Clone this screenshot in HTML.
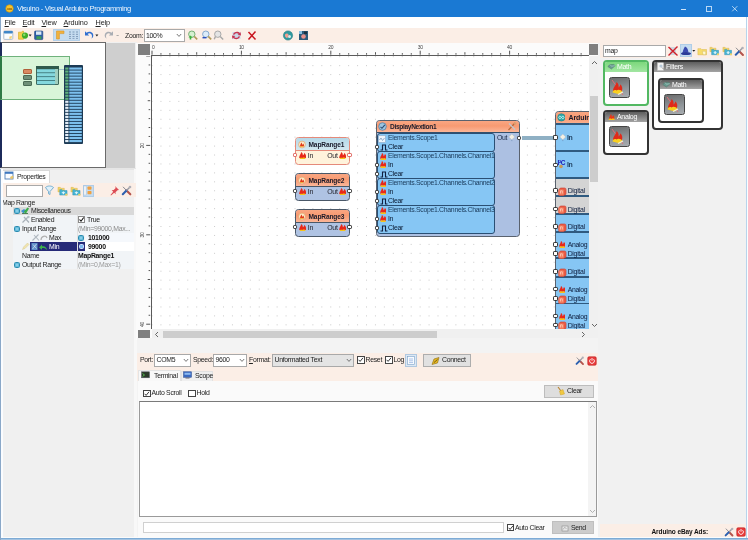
<!DOCTYPE html>
<html><head><meta charset="utf-8"><title>Visuino - Visual Arduino Programming</title>
<style>
*{box-sizing:border-box;margin:0;padding:0}
html,body{width:748px;height:540px;overflow:hidden;background:#f0f0f0;font-family:"Liberation Sans",sans-serif;font-size:6.9px;letter-spacing:-.3px;color:#222}
.a{position:absolute}
.t{position:absolute;white-space:nowrap;line-height:1}
#w{position:absolute;left:0;top:0;width:748px;height:540px;will-change:transform}
#title{left:0;top:0;width:748px;height:17px;background:#1a79d3}
#menu{left:0;top:17px;width:748px;height:11px;background:#fff;font-size:7.3px;letter-spacing:-.15px}
#tool{left:0;top:28px;width:748px;height:15px;background:#fbeee6}
.peach{background:#fbeee6}
u{text-decoration:underline}
.b{font-weight:bold;color:#111}
</style></head><body><div id="w">
<!-- TITLE -->
<div id="title" class="a">
 <svg class="a" style="left:4.800px;top:3.600px" width="9" height="9" viewBox="0 0 11 11"><circle cx="5.5" cy="5.5" r="4.6" fill="#f4c430" stroke="#c98f10" stroke-width=".8"/><text x="5.5" y="7.4" font-size="5" font-weight="bold" text-anchor="middle" fill="#7a4a00" font-family="Liberation Sans,sans-serif">oo</text></svg>
 <div class="t" style="left:17px;top:5px;font-size:7.6px;letter-spacing:-.38px;color:#eef5fd">Visuino - Visual Arduino Programming</div>
 <div class="a" style="left:681px;top:8.500px;width:5px;height:1px;background:#cfe4f8"></div>
 <div class="a" style="left:706px;top:6px;width:6px;height:5.500px;border:1px solid #b8d8f6"></div>
 <svg class="a" style="left:731px;top:5px" width="8" height="8" viewBox="0 0 8 8"><path d="M1.200 1.200L6.300 6.300M6.300 1.200L1.200 6.300" stroke="#d4e8fa" stroke-width=".8"/></svg>
</div>
<!-- MENU -->
<div id="menu" class="a">
 <div class="t" style="left:4.500px;top:2.300px"><u>F</u>ile</div>
 <div class="t" style="left:22.500px;top:2.300px"><u>E</u>dit</div>
 <div class="t" style="left:41.500px;top:2.300px"><u>V</u>iew</div>
 <div class="t" style="left:63.500px;top:2.300px"><u>A</u>rduino</div>
 <div class="t" style="left:95.500px;top:2.300px"><u>H</u>elp</div>
</div>
<!-- TOOLBAR -->
<div id="tool" class="a"></div>
<!-- toolbar items -->
<svg class="a" style="left:3px;top:30px" width="11" height="11" viewBox="0 0 11 11"><rect x=".8" y="1" width="9" height="8.4" rx="1" fill="#fdfdfd" stroke="#9db4cc" stroke-width=".8"/><rect x=".8" y="1" width="9" height="2.4" rx=".8" fill="#3f86c8"/><path d="M6.5 6.5l2.5-.5-.5 2.8-2.3 0z" fill="#f1d37a"/></svg>
<svg class="a" style="left:17px;top:30px" width="16" height="11" viewBox="0 0 16 11"><path d="M1.5 2.2h3l.8-1h1.2v8h-5z" fill="#f3d04a" stroke="#d3a91e" stroke-width=".6"/><circle cx="8" cy="5.6" r="3.1" fill="#3fae2a"/><circle cx="7.2" cy="4.8" r="1.2" fill="#8fdc6a"/><path d="M11.6 4.6h3l-1.5 1.8z" fill="#222"/></svg>
<svg class="a" style="left:34px;top:30px" width="10" height="11" viewBox="0 0 10 11"><rect x=".6" y="1" width="8.2" height="8.6" rx=".8" fill="#2c5da8" stroke="#1d3f7a" stroke-width=".6"/><rect x="2" y="1.4" width="5.4" height="3.4" fill="#d9e8f5"/><rect x="2.4" y="6.2" width="5" height="3" fill="#3d9c56"/></svg>
<div class="a" style="left:53px;top:29px;width:27px;height:12px;background:#c5dcf0;border:1px solid #b3d0ea"></div>
<svg class="a" style="left:55px;top:30px" width="11" height="10" viewBox="0 0 11 10"><path d="M1.5 1h7.5v2.6h-4.6v5.4h-2.9z" fill="#f2b23c" stroke="#d8962a" stroke-width=".6"/></svg>
<svg class="a" style="left:68px;top:30px" width="11" height="10" viewBox="0 0 11 10"><g fill="#7d9ab8"><rect x="1" y="1.5" width="2" height="1"/><rect x="4.5" y="1.5" width="2" height="1"/><rect x="8" y="1.5" width="2" height="1"/><rect x="1" y="3.8" width="2" height="1"/><rect x="4.5" y="3.8" width="2" height="1"/><rect x="8" y="3.8" width="2" height="1"/><rect x="1" y="6.1" width="2" height="1"/><rect x="4.5" y="6.1" width="2" height="1"/><rect x="8" y="6.1" width="2" height="1"/><rect x="1" y="8.2" width="2" height=".8"/><rect x="4.5" y="8.2" width="2" height=".8"/><rect x="8" y="8.2" width="2" height=".8"/></g></svg>
<svg class="a" style="left:84px;top:30px" width="16" height="10" viewBox="0 0 16 10"><path d="M1 1.2v4.2h4.2L3.6 3.9c1.6-1.3 4.2-.6 4.4 2.1.1 1-.2 1.9-.7 2.6 2-1 2.6-3.300 1.500-5.100C7.500 1.400 4.500 1.200 2.500 2.700z" fill="#2f6fd0"/><path d="M11.400 4.600h3l-1.500 1.800z" fill="#222"/></svg>
<svg class="a" style="left:103px;top:30px" width="18" height="10" viewBox="0 0 18 10"><path d="M10 1.200v4.200H5.800l1.600-1.500C5.800 2.600 3.200 3.300 3 6c-.1 1 .2 1.900.7 2.600-2-1-2.600-3.300-1.500-5.100C3.500 1.400 6.500 1.200 8.500 2.700z" fill="#a9adb3"/><rect x="13.500" y="5" width="2.200" height=".8" fill="#999"/></svg>
<div class="t" style="left:125px;top:32.5px">Zoom:</div>
<div class="a" style="left:144px;top:29px;width:41px;height:13px;background:#fff;border:1px solid #a9a9a9"></div>
<div class="t" style="left:146px;top:32.5px">100%</div>
<svg class="a" style="left:176px;top:33px" width="6" height="5" viewBox="0 0 6 5"><path d="M.8 1l2.200 2.400L5.200 1" fill="none" stroke="#555" stroke-width=".8"/></svg>
<!-- zoom icons -->
<svg class="a" style="left:187px;top:30px" width="12" height="11" viewBox="0 0 12 11"><circle cx="4.800" cy="4.200" r="3.200" fill="#d6f0d0" stroke="#6aa86a" stroke-width=".9"/><path d="M7.200 6.400l3 3" stroke="#b09a58" stroke-width="1.600"/><path d="M1.500 7.500l2-2 2 2h-1.200v2h-1.600v-2z" fill="#3cb43c"/></svg>
<svg class="a" style="left:201px;top:30px" width="12" height="11" viewBox="0 0 12 11"><circle cx="4.800" cy="4.200" r="3.200" fill="#dcecfa" stroke="#7aa0c8" stroke-width=".9"/><path d="M7.200 6.400l3 3" stroke="#b09a58" stroke-width="1.600"/><rect x="1.500" y="7" width="4" height="1.400" fill="#2a4fc0"/></svg>
<svg class="a" style="left:213px;top:30px" width="12" height="11" viewBox="0 0 12 11"><circle cx="4.800" cy="4.200" r="3.200" fill="#e4e4e4" stroke="#a0a0a0" stroke-width=".9"/><path d="M7.200 6.400l3 3M2.400 6.600l-1.200 2.600" stroke="#a8a8a8" stroke-width="1.400"/></svg>
<svg class="a" style="left:231px;top:30px" width="11" height="11" viewBox="0 0 11 11"><rect x="1.500" y="2" width="8" height="7" fill="#c9d9ea"/><path d="M2 4.500C3 1.500 7 1 9 3.200l.6-1.400.4 3.600-3.400-.4 1.200-.9C6.400 2.800 4 3 3.400 4.800zM9 6.500C8 9.500 4 10 2 7.800l-.6 1.400L1 5.600l3.400.4-1.200.9C4.600 8.200 7 8 7.600 6.200z" fill="#c8324e"/></svg>
<svg class="a" style="left:247px;top:30px" width="10" height="11" viewBox="0 0 10 11"><path d="M1.500 2l7 7.500M8.500 1.500l-7 8" stroke="#c8141e" stroke-width="1.500" fill="none"/></svg>
<svg class="a" style="left:282px;top:30px" width="12" height="11" viewBox="0 0 12 11"><circle cx="6" cy="5.500" r="4.600" fill="#2d9aa0" stroke="#2a7a80" stroke-width=".6"/><path d="M3 4.500c1-1.500 3-1.500 3.500 0 .5 1.500-1 2-1 3.500-1.500 0-3-1.500-2.500-3.500z" fill="#f0a090"/><circle cx="7.500" cy="6.500" r="1.500" fill="#d8e8e8"/></svg>
<svg class="a" style="left:298px;top:30px" width="11" height="11" viewBox="0 0 11 11"><rect x="1" y="1" width="9" height="9" fill="#2a5a7a"/><rect x="1" y="1" width="3" height="3" fill="#8ac0e0"/><circle cx="5.500" cy="6.500" r="2.300" fill="#e8908a"/><rect x="6" y="1.500" width="3" height="2.500" fill="#1a3040"/></svg>

<!-- LEFT PANEL -->
<div class="a" style="left:0;top:42px;width:137px;height:498px;background:#f0f0f0"></div>
<div class="a" style="left:0;top:42px;width:106px;height:126px;background:#fff;border:1px solid #6a6a6a;border-left:2px solid #1c2a5a"></div>
<div class="a" style="left:106px;top:43px;width:29px;height:126px;background:#cfcfcf"></div>
<div class="a" style="left:0;top:168px;width:137px;height:2px;background:#e6e6e6"></div>
<!-- overview contents -->
<div class="a" style="left:0;top:56px;width:70px;height:44px;background:#d9f5d9;border:1px solid #6fb27c;border-left:2px solid #2f7a46"></div>
<div class="a" style="left:23px;top:69px;width:9px;height:5px;background:#d98a62;border:1px solid #b0603a;border-radius:1px"></div>
<div class="a" style="left:23px;top:75px;width:9px;height:5px;background:#6f9078;border:1px solid #4a6a54;border-radius:1px"></div>
<div class="a" style="left:23px;top:81px;width:9px;height:5px;background:#6f9078;border:1px solid #4a6a54;border-radius:1px"></div>
<div class="a" style="left:36px;top:66px;width:23px;height:19px;background:#9fcfc0;border:1px solid #3f6a5c;border-radius:1px"></div>
<div class="a" style="left:36px;top:66px;width:23px;height:3px;background:#2f5a4c"></div>
<div class="a" style="left:37px;top:69px;width:18px;height:15.500px;background:#3f7a7c"></div>
<svg class="a" style="left:37px;top:69px" width="18" height="15" viewBox="0 0 18 15"><rect x="0" y="0.30" width="18" height="3" fill="#84d8de"/><rect x="0" y="4.20" width="18" height="3" fill="#84d8de"/><rect x="0" y="8.10" width="18" height="3" fill="#84d8de"/><rect x="0" y="12.00" width="18" height="3" fill="#84d8de"/></svg>
<div class="a" style="left:59px;top:69px;width:5px;height:1px;background:#9fc0c8"></div>
<div class="a" style="left:64px;top:65px;width:19px;height:79px;background:#1c3a55;border-radius:1px"></div>
<svg class="a" style="left:64px;top:65px" width="19" height="79" viewBox="0 0 19 79"><rect x="1.200" y="2.50" width="3.300" height="2.12" fill="#5fb27c"/><rect x="5.300" y="2.50" width="12.500" height="2.12" fill="#7cc0ee"/><rect x="1.200" y="5.52" width="3.300" height="2.12" fill="#5fb27c"/><rect x="5.300" y="5.52" width="12.500" height="2.12" fill="#7cc0ee"/><rect x="1.200" y="8.54" width="3.300" height="2.12" fill="#5fb27c"/><rect x="5.300" y="8.54" width="12.500" height="2.12" fill="#7cc0ee"/><rect x="1.200" y="11.56" width="3.300" height="2.12" fill="#5fb27c"/><rect x="5.300" y="11.56" width="12.500" height="2.12" fill="#7cc0ee"/><rect x="1.200" y="14.58" width="3.300" height="2.12" fill="#5fb27c"/><rect x="5.300" y="14.58" width="12.500" height="2.12" fill="#7cc0ee"/><rect x="1.200" y="17.60" width="3.300" height="2.12" fill="#5fb27c"/><rect x="5.300" y="17.60" width="12.500" height="2.12" fill="#7cc0ee"/><rect x="1.200" y="20.62" width="3.300" height="2.12" fill="#5fb27c"/><rect x="5.300" y="20.62" width="12.500" height="2.12" fill="#7cc0ee"/><rect x="1.200" y="23.64" width="3.300" height="2.12" fill="#5fb27c"/><rect x="5.300" y="23.64" width="12.500" height="2.12" fill="#7cc0ee"/><rect x="1.200" y="26.66" width="3.300" height="2.12" fill="#5fb27c"/><rect x="5.300" y="26.66" width="12.500" height="2.12" fill="#7cc0ee"/><rect x="1.200" y="29.68" width="3.300" height="2.12" fill="#5fb27c"/><rect x="5.300" y="29.68" width="12.500" height="2.12" fill="#7cc0ee"/><rect x="1.200" y="32.70" width="3.300" height="2.12" fill="#5fb27c"/><rect x="5.300" y="32.70" width="12.500" height="2.12" fill="#7cc0ee"/><rect x="1.200" y="35.72" width="3.300" height="2.12" fill="#e4eef8"/><rect x="5.300" y="35.72" width="12.500" height="2.12" fill="#7cc0ee"/><rect x="1.200" y="38.74" width="3.300" height="2.12" fill="#e4eef8"/><rect x="5.300" y="38.74" width="12.500" height="2.12" fill="#7cc0ee"/><rect x="1.200" y="41.76" width="3.300" height="2.12" fill="#e4eef8"/><rect x="5.300" y="41.76" width="12.500" height="2.12" fill="#7cc0ee"/><rect x="1.200" y="44.78" width="3.300" height="2.12" fill="#e4eef8"/><rect x="5.300" y="44.78" width="12.500" height="2.12" fill="#7cc0ee"/><rect x="1.200" y="47.80" width="3.300" height="2.12" fill="#e4eef8"/><rect x="5.300" y="47.80" width="12.500" height="2.12" fill="#7cc0ee"/><rect x="1.200" y="50.82" width="3.300" height="2.12" fill="#e4eef8"/><rect x="5.300" y="50.82" width="12.500" height="2.12" fill="#7cc0ee"/><rect x="1.200" y="53.84" width="3.300" height="2.12" fill="#e4eef8"/><rect x="5.300" y="53.84" width="12.500" height="2.12" fill="#7cc0ee"/><rect x="1.200" y="56.86" width="3.300" height="2.12" fill="#e4eef8"/><rect x="5.300" y="56.86" width="12.500" height="2.12" fill="#7cc0ee"/><rect x="1.200" y="59.88" width="3.300" height="2.12" fill="#e4eef8"/><rect x="5.300" y="59.88" width="12.500" height="2.12" fill="#7cc0ee"/><rect x="1.200" y="62.90" width="3.300" height="2.12" fill="#e4eef8"/><rect x="5.300" y="62.90" width="12.500" height="2.12" fill="#7cc0ee"/><rect x="1.200" y="65.92" width="3.300" height="2.12" fill="#e4eef8"/><rect x="5.300" y="65.92" width="12.500" height="2.12" fill="#7cc0ee"/><rect x="1.200" y="68.94" width="3.300" height="2.12" fill="#e4eef8"/><rect x="5.300" y="68.94" width="12.500" height="2.12" fill="#7cc0ee"/><rect x="1.200" y="71.96" width="3.300" height="2.12" fill="#e4eef8"/><rect x="5.300" y="71.96" width="12.500" height="2.12" fill="#7cc0ee"/><rect x="1.200" y="74.98" width="3.300" height="2.12" fill="#e4eef8"/><rect x="5.300" y="74.98" width="12.500" height="2.12" fill="#7cc0ee"/></svg>
<!-- Properties tab -->
<div class="a" style="left:133.500px;top:169px;width:4px;height:369px;background:#f8f8f8"></div>
<div class="a" style="left:2px;top:170px;width:131.500px;height:370px;background:#f0f0f0"></div>
<div class="a" style="left:13px;top:215px;width:120.500px;height:54px;background:#f1f4f7"></div>
<div class="a" style="left:2px;top:170px;width:48px;height:13px;background:#fff;border:1px solid #d9d9d9;border-bottom:none"></div>
<svg class="a" style="left:4px;top:171px" width="11" height="10" viewBox="0 0 11 10"><rect x="1" y="1" width="8" height="7" fill="#fafcff" stroke="#4f7fb8" stroke-width=".9"/><rect x="1" y="1" width="8" height="1.800" fill="#3f78c0"/><path d="M6 6l3-1.500.5 2.500-2.500 1.500z" fill="#e9c46a"/></svg>
<div class="t" style="left:17px;top:174px">Properties</div>
<div class="a peach" style="left:3px;top:183.300px;width:132.500px;height:14px"></div>
<div class="a" style="left:6px;top:185px;width:37px;height:12px;background:#fff;border:1px solid #a9a9a9"></div>
<svg class="a" style="left:44px;top:185px" width="11" height="11" viewBox="0 0 11 11"><path d="M1.500 2.500c2-2 6-2 8 0L6 6.500v3l-1.500-.8V6.500z" fill="#dff0fa" stroke="#5aa0c8" stroke-width=".8"/></svg>
<svg class="a" style="left:56.5px;top:185.5px" width="11" height="10" viewBox="0 0 12 11"><path d="M1 1.500h2.500l.8 1H8v4H1z" fill="#f2d468" stroke="#d0aa3a" stroke-width=".4"/><path d="M3 4h2.500l.8 1H11v5H3z" fill="#46b4d4" stroke="#2a8cb0" stroke-width=".5"/><path d="M7 5.800l2.200 2H7.800v1.400H6.200V7.800H4.800z" fill="#dff4fa"/><path d="M9 8.500h2.500v2H9z" fill="#f2d468"/></svg>
<svg class="a" style="left:69.5px;top:185.5px" width="11" height="10" viewBox="0 0 12 11"><path d="M1 1.500h2.500l.8 1H8v4H1z" fill="#f2d468" stroke="#d0aa3a" stroke-width=".4"/><path d="M3 4h2.500l.8 1H11v5H3z" fill="#46b4d4" stroke="#2a8cb0" stroke-width=".5"/><path d="M7 5.800l2.200 2H7.800v1.400H6.200V7.800H4.800z" fill="#dff4fa"/><path d="M9 8.500h2.500v2H9z" fill="#f2d468"/></svg>
<div class="a" style="left:82.500px;top:185px;width:11px;height:11.500px;background:#c5dcf0;border:1px solid #b0cde8"></div>
<svg class="a" style="left:83px;top:185px" width="10" height="11" viewBox="0 0 10 11"><rect x="1" y="1" width="2" height="9" fill="#fff" stroke="#a0b8d0" stroke-width=".4"/><rect x="4.500" y="1.500" width="4" height="3.200" rx=".8" fill="#f0a040"/><rect x="4.500" y="6" width="4" height="3.200" rx=".8" fill="#f0a040"/></svg>
<svg class="a" style="left:109px;top:185px" width="11" height="11" viewBox="0 0 11 11"><path d="M6 1l4 4-1.500.3-2 2 .2 2-1.500-1.500L2 10.500l-.5-.5L4.200 6.800 2.700 5.300l2-.200 2-2z" fill="#dc4c54"/></svg>
<svg class="a" style="left:121px;top:185px" width="11" height="11" viewBox="0 0 11 11"><path d="M2 1.800l3.500 3.700" stroke="#8a8a90" stroke-width="1"/><path d="M5.500 5.500l3.800 3.800" stroke="#b4544c" stroke-width="2.100" stroke-linecap="round"/><path d="M1.800 9.200l3.700-3.700" stroke="#2c60b0" stroke-width="2.100" stroke-linecap="round"/><path d="M5.500 5.500l3-3" stroke="#9a9aa2" stroke-width="1.500"/><circle cx="9" cy="2" r="1.300" fill="#b0b0b8"/></svg>
<div class="t" style="left:2px;top:200px">Map Range</div>
<!-- tree -->
<div class="a" style="left:13px;top:206.500px;width:120.500px;height:8.500px;background:#d9d9d9"></div>
<div class="a" style="left:85px;top:233px;width:48.500px;height:9px;background:#f5f8fc"></div>
<div class="a" style="left:85px;top:242px;width:48.500px;height:9px;background:#fff"></div>
<div class="a" style="left:30px;top:242px;width:55px;height:9px;background:#262a78"></div>
<div class="a" style="left:77px;top:215px;width:1px;height:54px;background:#e2e2e2"></div>
<div class="a" style="left:14px;top:208px;width:5.500px;height:5.500px;border-radius:1.500px;background:radial-gradient(#9fdcf0,#3fa4cc);border:.5px solid #2a8cb0"></div>
<div class="a" style="left:14px;top:226px;width:5.500px;height:5.500px;border-radius:1.500px;background:radial-gradient(#9fdcf0,#3fa4cc);border:.5px solid #2a8cb0"></div>
<div class="a" style="left:14px;top:262px;width:5.500px;height:5.500px;border-radius:1.500px;background:radial-gradient(#9fdcf0,#3fa4cc);border:.5px solid #2a8cb0"></div>
<div class="a" style="left:78px;top:235px;width:5.500px;height:5.500px;border-radius:1.500px;background:radial-gradient(#9fdcf0,#3fa4cc);border:.5px solid #2a8cb0"></div>
<div class="a" style="left:79px;top:244px;width:5px;height:5px;border-radius:1.500px;background:#7fb8f0;border:.5px solid #cfe0ff"></div>
<svg class="a" style="left:20px;top:206px" width="10" height="9" viewBox="0 0 10 9"><path d="M1 5l3-2 2 1.500-2.500 3z" fill="#3f8fd0"/><path d="M3.500 6l4-4.500 1.500 1-3 5z" fill="#3cae4a"/><path d="M2 7.500h6" stroke="#2f6a3a" stroke-width=".8"/></svg>
<svg class="a" style="left:21px;top:215px" width="10" height="9" viewBox="0 0 10 9"><path d="M1.500 7.500l6-6M3 2l5 5.500" stroke="#a8b0b8" stroke-width="1.200"/><circle cx="7.500" cy="2" r="1.200" fill="#b8c0c8"/></svg>
<svg class="a" style="left:31px;top:233px" width="17" height="9" viewBox="0 0 17 9"><path d="M1.500 7.500l6-6M3 2l5 5.500" stroke="#b0b8c0" stroke-width="1.100"/><path d="M10 7c0-4 5-5 6-2" stroke="#b0b0b0" stroke-width="1.200" fill="none"/></svg>
<svg class="a" style="left:21px;top:242px" width="9" height="9" viewBox="0 0 9 9"><path d="M1.500 7.500l1-2.500 4-4 1.500 1.500-4 4z" fill="#f0e4b0" stroke="#d0c080" stroke-width=".4"/></svg>
<svg class="a" style="left:31px;top:242px" width="17" height="9" viewBox="0 0 17 9"><rect x=".5" y="1" width="6" height="7" fill="#5f8fc8"/><path d="M1.500 7l4-5M2 2.500l3.500 4" stroke="#cfe0f0" stroke-width=".8"/><path d="M8 5.500l3-3v1.800c3-.5 5 1.500 5 4-1-2-3-2.500-5-2.300v1.800z" fill="#3cb44a"/></svg>
<div class="t" style="left:31px;top:208px">Miscellaneous</div>
<div class="t" style="left:31px;top:217px">Enabled</div>
<div class="t" style="left:22px;top:226px">Input Range</div>
<div class="t" style="left:49px;top:235px">Max</div>
<div class="t" style="left:49px;top:244px;color:#fff">Min</div>
<div class="t" style="left:22px;top:253px">Name</div>
<div class="t" style="left:22px;top:262px">Output Range</div>
<div class="a" style="left:78px;top:216px;width:7px;height:7px;background:#fff;border:1px solid #8a8a8a"></div>
<svg class="a" style="left:78px;top:216px" width="7" height="7" viewBox="0 0 7 7"><path d="M1.500 3.500l1.500 1.700L5.700 1.500" stroke="#111" stroke-width="1.100" fill="none"/></svg>
<div class="t" style="left:87px;top:217px">True</div>
<div class="t" style="left:78px;top:226px;color:#8a8a8a">(Min=99000,Max...</div>
<div class="t b" style="left:88px;top:235px">101000</div>
<div class="t b" style="left:88px;top:244px">99000</div>
<div class="t b" style="left:78px;top:253px">MapRange1</div>
<div class="t" style="left:78px;top:262px;color:#9a9a9a">(Min=0,Max=1)</div>

<!-- CANVAS AREA -->
<div class="a" style="left:135.500px;top:43.300px;width:464.500px;height:297px;background:#fbfbfb"></div>
<div class="a" style="left:138px;top:44px;width:12px;height:11px;background:#7f7f7f"></div>
<div class="a" id="cv" style="left:151.300px;top:55.300px;width:437.700px;height:273.700px;background:#fff;overflow:hidden;border-left:1.700px solid #5a5a5a;border-top:1.700px solid #5a5a5a">
<div class="a" style="left:-1px;top:-1px;width:437px;height:273px;background-image:radial-gradient(circle,#cacaca 0,#cacaca .5px,rgba(255,255,255,0) .9px);background-size:8.94px 8.94px;background-position:-3.47px -2.77px"></div>
</div>
<svg class="a" style="left:137px;top:43px" width="452" height="13" viewBox="0 0 452 13"><rect x="14.50" y="7.70" width="1" height="4.00" fill="#555"/><text x="15.00" y="6.3" font-size="5" fill="#444" font-family="Liberation Sans,sans-serif">0</text><rect x="23.44" y="10.10" width="1" height="1.60" fill="#555"/><rect x="32.38" y="10.10" width="1" height="1.60" fill="#555"/><rect x="41.32" y="10.10" width="1" height="1.60" fill="#555"/><rect x="50.26" y="10.10" width="1" height="1.60" fill="#555"/><rect x="59.20" y="9.20" width="1" height="2.50" fill="#555"/><rect x="68.14" y="10.10" width="1" height="1.60" fill="#555"/><rect x="77.08" y="10.10" width="1" height="1.60" fill="#555"/><rect x="86.02" y="10.10" width="1" height="1.60" fill="#555"/><rect x="94.96" y="10.10" width="1" height="1.60" fill="#555"/><rect x="103.90" y="7.70" width="1" height="4.00" fill="#555"/><text x="101.90" y="6.3" font-size="5" fill="#444" font-family="Liberation Sans,sans-serif">10</text><rect x="112.84" y="10.10" width="1" height="1.60" fill="#555"/><rect x="121.78" y="10.10" width="1" height="1.60" fill="#555"/><rect x="130.72" y="10.10" width="1" height="1.60" fill="#555"/><rect x="139.66" y="10.10" width="1" height="1.60" fill="#555"/><rect x="148.60" y="9.20" width="1" height="2.50" fill="#555"/><rect x="157.54" y="10.10" width="1" height="1.60" fill="#555"/><rect x="166.48" y="10.10" width="1" height="1.60" fill="#555"/><rect x="175.42" y="10.10" width="1" height="1.60" fill="#555"/><rect x="184.36" y="10.10" width="1" height="1.60" fill="#555"/><rect x="193.30" y="7.70" width="1" height="4.00" fill="#555"/><text x="191.30" y="6.3" font-size="5" fill="#444" font-family="Liberation Sans,sans-serif">20</text><rect x="202.24" y="10.10" width="1" height="1.60" fill="#555"/><rect x="211.18" y="10.10" width="1" height="1.60" fill="#555"/><rect x="220.12" y="10.10" width="1" height="1.60" fill="#555"/><rect x="229.06" y="10.10" width="1" height="1.60" fill="#555"/><rect x="238.00" y="9.20" width="1" height="2.50" fill="#555"/><rect x="246.94" y="10.10" width="1" height="1.60" fill="#555"/><rect x="255.88" y="10.10" width="1" height="1.60" fill="#555"/><rect x="264.82" y="10.10" width="1" height="1.60" fill="#555"/><rect x="273.76" y="10.10" width="1" height="1.60" fill="#555"/><rect x="282.70" y="7.70" width="1" height="4.00" fill="#555"/><text x="280.70" y="6.3" font-size="5" fill="#444" font-family="Liberation Sans,sans-serif">30</text><rect x="291.64" y="10.10" width="1" height="1.60" fill="#555"/><rect x="300.58" y="10.10" width="1" height="1.60" fill="#555"/><rect x="309.52" y="10.10" width="1" height="1.60" fill="#555"/><rect x="318.46" y="10.10" width="1" height="1.60" fill="#555"/><rect x="327.40" y="9.20" width="1" height="2.50" fill="#555"/><rect x="336.34" y="10.10" width="1" height="1.60" fill="#555"/><rect x="345.28" y="10.10" width="1" height="1.60" fill="#555"/><rect x="354.22" y="10.10" width="1" height="1.60" fill="#555"/><rect x="363.16" y="10.10" width="1" height="1.60" fill="#555"/><rect x="372.10" y="7.70" width="1" height="4.00" fill="#555"/><text x="370.10" y="6.3" font-size="5" fill="#444" font-family="Liberation Sans,sans-serif">40</text><rect x="381.04" y="10.10" width="1" height="1.60" fill="#555"/><rect x="389.98" y="10.10" width="1" height="1.60" fill="#555"/><rect x="398.92" y="10.10" width="1" height="1.60" fill="#555"/><rect x="407.86" y="10.10" width="1" height="1.60" fill="#555"/><rect x="416.80" y="9.20" width="1" height="2.50" fill="#555"/><rect x="425.74" y="10.10" width="1" height="1.60" fill="#555"/><rect x="434.68" y="10.10" width="1" height="1.60" fill="#555"/><rect x="443.62" y="10.10" width="1" height="1.60" fill="#555"/></svg>
<svg class="a" style="left:137px;top:56px" width="15" height="273" viewBox="0 0 15 273"><rect x="9.20" y="-0.50" width="4.00" height="1" fill="#555"/><rect x="11.60" y="8.44" width="1.60" height="1" fill="#555"/><rect x="11.60" y="17.38" width="1.60" height="1" fill="#555"/><rect x="11.60" y="26.32" width="1.60" height="1" fill="#555"/><rect x="11.60" y="35.26" width="1.60" height="1" fill="#555"/><rect x="10.70" y="44.20" width="2.50" height="1" fill="#555"/><rect x="11.60" y="53.14" width="1.60" height="1" fill="#555"/><rect x="11.60" y="62.08" width="1.60" height="1" fill="#555"/><rect x="11.60" y="71.02" width="1.60" height="1" fill="#555"/><rect x="11.60" y="79.96" width="1.60" height="1" fill="#555"/><rect x="9.20" y="88.90" width="4.00" height="1" fill="#555"/><text transform="translate(7,92.20) rotate(-90)" font-size="5" fill="#444" font-family="Liberation Sans,sans-serif">20</text><rect x="11.60" y="97.84" width="1.60" height="1" fill="#555"/><rect x="11.60" y="106.78" width="1.60" height="1" fill="#555"/><rect x="11.60" y="115.72" width="1.60" height="1" fill="#555"/><rect x="11.60" y="124.66" width="1.60" height="1" fill="#555"/><rect x="10.70" y="133.60" width="2.50" height="1" fill="#555"/><rect x="11.60" y="142.54" width="1.60" height="1" fill="#555"/><rect x="11.60" y="151.48" width="1.60" height="1" fill="#555"/><rect x="11.60" y="160.42" width="1.60" height="1" fill="#555"/><rect x="11.60" y="169.36" width="1.60" height="1" fill="#555"/><rect x="9.20" y="178.30" width="4.00" height="1" fill="#555"/><text transform="translate(7,181.60) rotate(-90)" font-size="5" fill="#444" font-family="Liberation Sans,sans-serif">30</text><rect x="11.60" y="187.24" width="1.60" height="1" fill="#555"/><rect x="11.60" y="196.18" width="1.60" height="1" fill="#555"/><rect x="11.60" y="205.12" width="1.60" height="1" fill="#555"/><rect x="11.60" y="214.06" width="1.60" height="1" fill="#555"/><rect x="10.70" y="223.00" width="2.50" height="1" fill="#555"/><rect x="11.60" y="231.94" width="1.60" height="1" fill="#555"/><rect x="11.60" y="240.88" width="1.60" height="1" fill="#555"/><rect x="11.60" y="249.82" width="1.60" height="1" fill="#555"/><rect x="11.60" y="258.76" width="1.60" height="1" fill="#555"/><rect x="9.20" y="267.70" width="4.00" height="1" fill="#555"/><text transform="translate(7,271.00) rotate(-90)" font-size="5" fill="#444" font-family="Liberation Sans,sans-serif">40</text></svg>
<!-- BLOCKS -->
<div class="a" style="left:0;top:0;width:588.500px;height:329px;overflow:hidden">
<div class="a" style="left:295px;top:137px;width:55px;height:28px;background:#fff3dc;border:1px solid #e58a7a;border-radius:3.500px;overflow:hidden"><div class="a" style="left:0;top:0;width:53px;height:12.700px;background:linear-gradient(#b4d8e8,#d3e8f0);border-bottom:1px solid #e58a7a"></div></div>
<svg class="a" style="left:297.8px;top:140px" width="8" height="9" viewBox="0 0 8 9"><circle cx="4" cy="4.500" r="3.400" fill="#fde9c8" stroke="#d89a5a" stroke-width=".6"/><path d="M2 6.500c0-2 1-2.500 1.200-4 1 .8 1.200 1.800 1 2.500.6-.3.900-1 .9-1.500 1 1 1.100 2 .7 3z" fill="#e03a1a"/><path d="M2.200 7c.3-1 1.500-1.200 3.600 0z" fill="#f7c21a"/></svg>
<div class="t b" style="left:308.5px;top:141.5px;font-size:6.600px;letter-spacing:-.13px;color:#1a1a2a">MapRange1</div>
<div class="a" style="left:292.8px;top:152.8px;width:4.400px;height:4.400px;background:#fff;border:1px solid #e0605a;border-radius:1.200px"></div>
<div class="a" style="left:347.3px;top:152.8px;width:4.400px;height:4.400px;background:#fff;border:1px solid #e0605a;border-radius:1.200px"></div>
<svg class="a" style="left:299px;top:151.9px" width="7" height="7.4" viewBox="0.8 0.9 5.9 6.8" preserveAspectRatio="none"><path d="M1 6.500C.8 4 2.500 3.500 2.600 1c1.200.8 1.500 2 1.400 3 .8-.5 1.200-1.500 1.200-2.200C6.800 3 7 5 6.500 6.500z" fill="#e8281a"/><path d="M1.300 7.600c0-1.600 1.200-1.800 2.300-1.200 1-.7 2.700-.4 2.700 1.200z" fill="#f7c21a"/></svg>
<svg class="a" style="left:339px;top:151.9px" width="7" height="7.4" viewBox="0.8 0.9 5.9 6.8" preserveAspectRatio="none"><path d="M1 6.500C.8 4 2.500 3.500 2.600 1c1.200.8 1.500 2 1.400 3 .8-.5 1.200-1.500 1.200-2.200C6.800 3 7 5 6.500 6.500z" fill="#e8281a"/><path d="M1.300 7.600c0-1.600 1.200-1.800 2.300-1.200 1-.7 2.700-.4 2.700 1.200z" fill="#f7c21a"/></svg>
<div class="t" style="left:307.8px;top:152.7px;color:#1c1c24">In</div>
<div class="t" style="left:327.3px;top:152.7px;color:#1c1c24">Out</div>
<div class="a" style="left:295px;top:173px;width:55px;height:28px;background:#afc3e3;border:1px solid #4a5868;border-radius:3.500px;overflow:hidden"><div class="a" style="left:0;top:0;width:53px;height:12.700px;background:linear-gradient(#f9a682,#f79a72 45%,#fbb698);border-bottom:1px solid #4a5868"></div></div>
<svg class="a" style="left:297.8px;top:176px" width="8" height="9" viewBox="0 0 8 9"><circle cx="4" cy="4.500" r="3.400" fill="#fde9c8" stroke="#d89a5a" stroke-width=".6"/><path d="M2 6.500c0-2 1-2.500 1.200-4 1 .8 1.200 1.800 1 2.500.6-.3.900-1 .9-1.500 1 1 1.100 2 .7 3z" fill="#e03a1a"/><path d="M2.200 7c.3-1 1.500-1.200 3.600 0z" fill="#f7c21a"/></svg>
<div class="t b" style="left:308.5px;top:177.5px;font-size:6.600px;letter-spacing:-.13px;color:#1a1a2a">MapRange2</div>
<div class="a" style="left:292.8px;top:188.8px;width:4.400px;height:4.400px;background:#fff;border:1px solid #333;border-radius:1.200px"></div>
<div class="a" style="left:347.3px;top:188.8px;width:4.400px;height:4.400px;background:#fff;border:1px solid #333;border-radius:1.200px"></div>
<svg class="a" style="left:299px;top:187.9px" width="7" height="7.4" viewBox="0.8 0.9 5.9 6.8" preserveAspectRatio="none"><path d="M1 6.500C.8 4 2.500 3.500 2.600 1c1.200.8 1.500 2 1.400 3 .8-.5 1.200-1.500 1.200-2.200C6.800 3 7 5 6.500 6.500z" fill="#e8281a"/><path d="M1.300 7.600c0-1.600 1.200-1.800 2.300-1.200 1-.7 2.700-.4 2.700 1.200z" fill="#f7c21a"/></svg>
<svg class="a" style="left:339px;top:187.9px" width="7" height="7.4" viewBox="0.8 0.9 5.9 6.8" preserveAspectRatio="none"><path d="M1 6.500C.8 4 2.500 3.500 2.600 1c1.200.8 1.500 2 1.400 3 .8-.5 1.200-1.500 1.200-2.200C6.800 3 7 5 6.500 6.500z" fill="#e8281a"/><path d="M1.300 7.600c0-1.600 1.200-1.800 2.300-1.200 1-.7 2.700-.4 2.700 1.200z" fill="#f7c21a"/></svg>
<div class="t" style="left:307.8px;top:188.7px;color:#1c1c24">In</div>
<div class="t" style="left:327.3px;top:188.7px;color:#1c1c24">Out</div>
<div class="a" style="left:295px;top:209px;width:55px;height:28px;background:#afc3e3;border:1px solid #4a5868;border-radius:3.500px;overflow:hidden"><div class="a" style="left:0;top:0;width:53px;height:12.700px;background:linear-gradient(#f9a682,#f79a72 45%,#fbb698);border-bottom:1px solid #4a5868"></div></div>
<svg class="a" style="left:297.8px;top:212px" width="8" height="9" viewBox="0 0 8 9"><circle cx="4" cy="4.500" r="3.400" fill="#fde9c8" stroke="#d89a5a" stroke-width=".6"/><path d="M2 6.500c0-2 1-2.500 1.200-4 1 .8 1.200 1.800 1 2.500.6-.3.900-1 .9-1.500 1 1 1.100 2 .7 3z" fill="#e03a1a"/><path d="M2.200 7c.3-1 1.500-1.200 3.600 0z" fill="#f7c21a"/></svg>
<div class="t b" style="left:308.5px;top:213.5px;font-size:6.600px;letter-spacing:-.13px;color:#1a1a2a">MapRange3</div>
<div class="a" style="left:292.8px;top:224.8px;width:4.400px;height:4.400px;background:#fff;border:1px solid #333;border-radius:1.200px"></div>
<div class="a" style="left:347.3px;top:224.8px;width:4.400px;height:4.400px;background:#fff;border:1px solid #333;border-radius:1.200px"></div>
<svg class="a" style="left:299px;top:223.9px" width="7" height="7.4" viewBox="0.8 0.9 5.9 6.8" preserveAspectRatio="none"><path d="M1 6.500C.8 4 2.500 3.500 2.600 1c1.200.8 1.500 2 1.400 3 .8-.5 1.200-1.500 1.200-2.200C6.800 3 7 5 6.500 6.500z" fill="#e8281a"/><path d="M1.300 7.600c0-1.600 1.200-1.800 2.300-1.200 1-.7 2.700-.4 2.700 1.200z" fill="#f7c21a"/></svg>
<svg class="a" style="left:339px;top:223.9px" width="7" height="7.4" viewBox="0.8 0.9 5.9 6.8" preserveAspectRatio="none"><path d="M1 6.500C.8 4 2.500 3.500 2.600 1c1.200.8 1.500 2 1.400 3 .8-.5 1.200-1.500 1.200-2.200C6.800 3 7 5 6.500 6.500z" fill="#e8281a"/><path d="M1.300 7.600c0-1.600 1.200-1.800 2.300-1.200 1-.7 2.700-.4 2.700 1.200z" fill="#f7c21a"/></svg>
<div class="t" style="left:307.8px;top:224.7px;color:#1c1c24">In</div>
<div class="t" style="left:327.3px;top:224.7px;color:#1c1c24">Out</div>
<div class="a" style="left:376px;top:120px;width:144px;height:117px;background:#acc0e2;border:1px solid #5a626e;border-radius:3.500px;overflow:hidden"><div class="a" style="left:0;top:0;width:142px;height:12px;background:linear-gradient(#f9a682,#f79a72 45%,#fbb698);border-bottom:1.300px solid #34506c"></div></div>
<svg class="a" style="left:377.500px;top:122px" width="9" height="9" viewBox="0 0 9 9"><circle cx="4.500" cy="4.500" r="3.800" fill="#9cc4e0" stroke="#4a7aa0" stroke-width=".7"/><path d="M2.500 4.800l1.500 1.500 2.800-3.500" stroke="#2a4a70" stroke-width="1.100" fill="none"/></svg>
<div class="t b" style="left:390px;top:123.500px;font-size:6.600px;letter-spacing:-.33px;color:#1a1a2a">DisplayNextion1</div>
<svg class="a" style="left:507px;top:122px" width="10" height="9" viewBox="0 0 10 9"><path d="M1.500 8l6.500-7" stroke="#b8683a" stroke-width="1.300"/><path d="M2 1.500l6 6" stroke="#c0c8d0" stroke-width="1.300"/><circle cx="8" cy="1.500" r="1.300" fill="#d8a070"/></svg>
<div class="a" style="left:377px;top:133px;width:118px;height:19px;background:#86c6f4;border:1.400px solid #2a4f74;border-radius:3px"></div>
<svg class="a" style="left:378.200px;top:134.5px" width="8" height="8" viewBox="0 0 8 8"><rect x=".5" y=".5" width="7" height="7" fill="#eef4fa" stroke="#8aa8c8" stroke-width=".6"/><path d="M1.500 5l1.500-2 1.500 2.500L6.500 3" stroke="#7090b8" stroke-width=".7" fill="none"/></svg>
<div class="t" style="left:388px;top:135.3px;color:#1a3a5a">Elements.Scope1</div>
<div class="a" style="left:374.8px;top:144.8px;width:4.400px;height:4.400px;background:#fff;border:1px solid #333;border-radius:1.200px"></div>
<svg class="a" style="left:379.5px;top:143.8px" width="8" height="7" viewBox="0 0 8 7"><path d="M.5 6h2V1h3v5h2" stroke="#102040" stroke-width="1.100" fill="none"/></svg>
<div class="t" style="left:388px;top:144.1px;color:#081830">Clear</div>
<div class="a" style="left:377px;top:151px;width:118px;height:28px;background:#86c6f4;border:1.400px solid #2a4f74;border-radius:3px"></div>
<svg class="a" style="left:379.5px;top:152.5px" width="6.5" height="7" viewBox="0.8 0.9 5.9 6.8" preserveAspectRatio="none"><path d="M1 6.500C.8 4 2.500 3.500 2.600 1c1.200.8 1.500 2 1.400 3 .8-.5 1.200-1.500 1.200-2.200C6.800 3 7 5 6.500 6.500z" fill="#e8281a"/><path d="M1.300 7.600c0-1.600 1.200-1.800 2.300-1.200 1-.7 2.700-.4 2.700 1.200z" fill="#f7c21a"/></svg>
<div class="t" style="left:388px;top:153.3px;color:#1a3a5a">Elements.Scope1.Channels.Channel1</div>
<div class="a" style="left:374.8px;top:162.8px;width:4.400px;height:4.400px;background:#fff;border:1px solid #333;border-radius:1.200px"></div>
<svg class="a" style="left:380px;top:161.3px" width="6.2" height="7" viewBox="0.8 0.9 5.9 6.8" preserveAspectRatio="none"><path d="M1 6.500C.8 4 2.500 3.500 2.600 1c1.200.8 1.500 2 1.400 3 .8-.5 1.200-1.500 1.200-2.200C6.800 3 7 5 6.500 6.500z" fill="#e8281a"/><path d="M1.300 7.600c0-1.600 1.200-1.800 2.300-1.200 1-.7 2.700-.4 2.700 1.200z" fill="#f7c21a"/></svg>
<div class="t" style="left:388px;top:162.1px;color:#081830">In</div>
<div class="a" style="left:374.8px;top:171.6px;width:4.400px;height:4.400px;background:#fff;border:1px solid #333;border-radius:1.200px"></div>
<svg class="a" style="left:379.5px;top:170.6px" width="8" height="7" viewBox="0 0 8 7"><path d="M.5 6h2V1h3v5h2" stroke="#102040" stroke-width="1.100" fill="none"/></svg>
<div class="t" style="left:388px;top:170.9px;color:#081830">Clear</div>
<div class="a" style="left:377px;top:178px;width:118px;height:28px;background:#86c6f4;border:1.400px solid #2a4f74;border-radius:3px"></div>
<svg class="a" style="left:379.5px;top:179.5px" width="6.5" height="7" viewBox="0.8 0.9 5.9 6.8" preserveAspectRatio="none"><path d="M1 6.500C.8 4 2.500 3.500 2.600 1c1.200.8 1.500 2 1.400 3 .8-.5 1.200-1.500 1.200-2.200C6.800 3 7 5 6.500 6.500z" fill="#e8281a"/><path d="M1.300 7.600c0-1.600 1.200-1.800 2.300-1.200 1-.7 2.700-.4 2.700 1.200z" fill="#f7c21a"/></svg>
<div class="t" style="left:388px;top:180.3px;color:#1a3a5a">Elements.Scope1.Channels.Channel2</div>
<div class="a" style="left:374.8px;top:189.8px;width:4.400px;height:4.400px;background:#fff;border:1px solid #333;border-radius:1.200px"></div>
<svg class="a" style="left:380px;top:188.3px" width="6.2" height="7" viewBox="0.8 0.9 5.9 6.8" preserveAspectRatio="none"><path d="M1 6.500C.8 4 2.500 3.500 2.600 1c1.200.8 1.500 2 1.400 3 .8-.5 1.200-1.500 1.200-2.200C6.800 3 7 5 6.500 6.500z" fill="#e8281a"/><path d="M1.300 7.600c0-1.600 1.200-1.800 2.300-1.200 1-.7 2.700-.4 2.700 1.200z" fill="#f7c21a"/></svg>
<div class="t" style="left:388px;top:189.1px;color:#081830">In</div>
<div class="a" style="left:374.8px;top:198.6px;width:4.400px;height:4.400px;background:#fff;border:1px solid #333;border-radius:1.200px"></div>
<svg class="a" style="left:379.5px;top:197.6px" width="8" height="7" viewBox="0 0 8 7"><path d="M.5 6h2V1h3v5h2" stroke="#102040" stroke-width="1.100" fill="none"/></svg>
<div class="t" style="left:388px;top:197.9px;color:#081830">Clear</div>
<div class="a" style="left:377px;top:205px;width:118px;height:29px;background:#86c6f4;border:1.400px solid #2a4f74;border-radius:3px"></div>
<svg class="a" style="left:379.5px;top:206.5px" width="6.5" height="7" viewBox="0.8 0.9 5.9 6.8" preserveAspectRatio="none"><path d="M1 6.500C.8 4 2.500 3.500 2.600 1c1.200.8 1.500 2 1.400 3 .8-.5 1.200-1.500 1.200-2.200C6.800 3 7 5 6.500 6.500z" fill="#e8281a"/><path d="M1.300 7.600c0-1.600 1.200-1.800 2.300-1.200 1-.7 2.700-.4 2.700 1.200z" fill="#f7c21a"/></svg>
<div class="t" style="left:388px;top:207.3px;color:#1a3a5a">Elements.Scope1.Channels.Channel3</div>
<div class="a" style="left:374.8px;top:216.8px;width:4.400px;height:4.400px;background:#fff;border:1px solid #333;border-radius:1.200px"></div>
<svg class="a" style="left:380px;top:215.3px" width="6.2" height="7" viewBox="0.8 0.9 5.9 6.8" preserveAspectRatio="none"><path d="M1 6.500C.8 4 2.500 3.500 2.600 1c1.200.8 1.500 2 1.400 3 .8-.5 1.200-1.500 1.200-2.200C6.800 3 7 5 6.500 6.500z" fill="#e8281a"/><path d="M1.300 7.600c0-1.600 1.200-1.800 2.300-1.200 1-.7 2.700-.4 2.700 1.200z" fill="#f7c21a"/></svg>
<div class="t" style="left:388px;top:216.1px;color:#081830">In</div>
<div class="a" style="left:374.8px;top:225.6px;width:4.400px;height:4.400px;background:#fff;border:1px solid #333;border-radius:1.200px"></div>
<svg class="a" style="left:379.5px;top:224.6px" width="8" height="7" viewBox="0 0 8 7"><path d="M.5 6h2V1h3v5h2" stroke="#102040" stroke-width="1.100" fill="none"/></svg>
<div class="t" style="left:388px;top:224.9px;color:#081830">Clear</div>
<div class="t" style="left:497px;top:134.500px;color:#1a2a4a">Out</div>
<svg class="a" style="left:508.2px;top:133.3px" width="7.600" height="8.600" viewBox="0 0 9 10"><path d="M4.500 1L8 4.500 4.500 8 1 4.500z" fill="#f4f0e4" stroke="#b8c0c8" stroke-width=".7"/><path d="M4.500 8v1.500" stroke="#7090b8" stroke-width=".9"/></svg>
<div class="a" style="left:522px;top:136px;width:33px;height:3.500px;background:#8fb0c4"></div>
<div class="a" style="left:517.1px;top:135.6px;width:4.400px;height:4.400px;background:#fff;border:1px solid #333;border-radius:1.200px"></div>
<div class="a" style="left:553.3px;top:135.3px;width:4.400px;height:4.400px;background:#fff;border:1px solid #333;border-radius:1.200px"></div>
<div class="a" style="left:555px;top:110.5px;width:60px;height:240px;background:#86c6f4;border:1px solid #5a626e;border-radius:3.500px;overflow:hidden"><div class="a" style="left:0;top:0;width:60px;height:13px;background:linear-gradient(#f9a682,#f79a72 45%,#fbb698)"></div></div>
<svg class="a" style="left:556.700px;top:112.800px" width="8.800" height="8.800" viewBox="0 0 10 10"><circle cx="5" cy="5" r="4.200" fill="#2fa8a8" stroke="#1a7a80" stroke-width=".6"/><path d="M2 5c0-1.800 2.300-1.800 3 0 .7 1.800 3 1.800 3 0s-2.300-1.800-3 0c-.7 1.800-3 1.800-3 0z" stroke="#dff" stroke-width=".8" fill="none"/></svg>
<div class="t b" style="left:568.500px;top:114px;font-size:7px;letter-spacing:-.1px;color:#1a1a2a">Arduino Nano</div>
<div class="a" style="left:556px;top:123.2px;width:40px;height:2px;background:#2f5a80"></div>
<div class="a" style="left:556px;top:150.3px;width:40px;height:2px;background:#2f5a80"></div>
<div class="a" style="left:556px;top:178px;width:40px;height:36px;background:#d4d4d4"></div>
<div class="a" style="left:556px;top:177.3px;width:40px;height:1.8px;background:#2f5a80"></div>
<div class="a" style="left:556px;top:195px;width:40px;height:1.8px;background:#2f5a80"></div>
<div class="a" style="left:556px;top:213.2px;width:40px;height:1.8px;background:#2f5a80"></div>
<div class="a" style="left:556px;top:231.2px;width:40px;height:1.8px;background:#2f5a80"></div>
<div class="a" style="left:556px;top:257.3px;width:40px;height:1.8px;background:#2f5a80"></div>
<div class="a" style="left:556px;top:276px;width:40px;height:1.8px;background:#2f5a80"></div>
<div class="a" style="left:556px;top:302.5px;width:40px;height:1.8px;background:#2f5a80"></div>
<div class="a" style="left:553.3px;top:135.3px;width:4.400px;height:4.400px;background:#fff;border:1px solid #333;border-radius:1.200px"></div>
<svg class="a" style="left:558.8px;top:133.3px" width="7.600" height="8.600" viewBox="0 0 9 10"><path d="M4.500 1L8 4.500 4.500 8 1 4.500z" fill="#f4f0e4" stroke="#b8c0c8" stroke-width=".7"/><path d="M4.500 8v1.500" stroke="#7090b8" stroke-width=".9"/></svg>
<div class="t b" style="left:567px;top:134.500px;color:#1a3a5a">In</div>
<div class="a" style="left:553.3px;top:162.6px;width:4.400px;height:4.400px;background:#fff;border:1px solid #333;border-radius:1.200px"></div>
<svg class="a" style="left:557px;top:159px" width="11" height="10" viewBox="0 0 11 10"><text x=".5" y="6" font-size="6.500" font-weight="bold" fill="#1a1ab8" font-family="Liberation Sans,sans-serif">I²C</text><circle cx="4" cy="7.500" r="1.800" fill="#c89a5a"/></svg>
<div class="t b" style="left:567px;top:162px;color:#1a3a5a">In</div>
<div class="a" style="left:553.3px;top:188.3px;width:4.400px;height:4.400px;background:#fff;border:1px solid #333;border-radius:1.200px"></div>
<svg class="a" style="left:558px;top:186.5px" width="9" height="9" viewBox="0 0 9 9"><rect x="1.500" y="1" width="6.500" height="7" rx="1.500" fill="#f0604a" stroke="#c83a2a" stroke-width=".6"/><rect x=".5" y="2" width="6" height="6.500" rx="1.500" fill="#f47a5a" stroke="#d84a3a" stroke-width=".5"/><path d="M2.500 6.500V3.800h1.800v2.700" stroke="#ffd8c8" stroke-width=".7" fill="none"/></svg>
<div class="t" style="left:567.700px;top:188.1px;color:#0c1c3c">Digital</div>
<div class="a" style="left:553.3px;top:206.7px;width:4.400px;height:4.400px;background:#fff;border:1px solid #333;border-radius:1.200px"></div>
<svg class="a" style="left:558px;top:204.9px" width="9" height="9" viewBox="0 0 9 9"><rect x="1.500" y="1" width="6.500" height="7" rx="1.500" fill="#f0604a" stroke="#c83a2a" stroke-width=".6"/><rect x=".5" y="2" width="6" height="6.500" rx="1.500" fill="#f47a5a" stroke="#d84a3a" stroke-width=".5"/><path d="M2.500 6.500V3.800h1.800v2.700" stroke="#ffd8c8" stroke-width=".7" fill="none"/></svg>
<div class="t" style="left:567.700px;top:206.5px;color:#0c1c3c">Digital</div>
<div class="a" style="left:553.3px;top:224.3px;width:4.400px;height:4.400px;background:#fff;border:1px solid #333;border-radius:1.200px"></div>
<svg class="a" style="left:558px;top:222.5px" width="9" height="9" viewBox="0 0 9 9"><rect x="1.500" y="1" width="6.500" height="7" rx="1.500" fill="#f0604a" stroke="#c83a2a" stroke-width=".6"/><rect x=".5" y="2" width="6" height="6.500" rx="1.500" fill="#f47a5a" stroke="#d84a3a" stroke-width=".5"/><path d="M2.500 6.500V3.800h1.800v2.700" stroke="#ffd8c8" stroke-width=".7" fill="none"/></svg>
<div class="t" style="left:567.700px;top:224.1px;color:#0c1c3c">Digital</div>
<div class="a" style="left:553.3px;top:242.3px;width:4.400px;height:4.400px;background:#fff;border:1px solid #333;border-radius:1.200px"></div>
<svg class="a" style="left:558.5px;top:241px" width="6.5" height="7" viewBox="0.8 0.9 5.9 6.8" preserveAspectRatio="none"><path d="M1 6.500C.8 4 2.500 3.500 2.600 1c1.200.8 1.500 2 1.400 3 .8-.5 1.200-1.500 1.200-2.200C6.800 3 7 5 6.500 6.500z" fill="#e8281a"/><path d="M1.300 7.600c0-1.600 1.200-1.800 2.300-1.200 1-.7 2.700-.4 2.700 1.200z" fill="#f7c21a"/></svg>
<div class="t" style="left:567.700px;top:242.1px;color:#0c1c3c">Analog</div>
<div class="a" style="left:553.3px;top:251.3px;width:4.400px;height:4.400px;background:#fff;border:1px solid #333;border-radius:1.200px"></div>
<svg class="a" style="left:558px;top:249.5px" width="9" height="9" viewBox="0 0 9 9"><rect x="1.500" y="1" width="6.500" height="7" rx="1.500" fill="#f0604a" stroke="#c83a2a" stroke-width=".6"/><rect x=".5" y="2" width="6" height="6.500" rx="1.500" fill="#f47a5a" stroke="#d84a3a" stroke-width=".5"/><path d="M2.500 6.500V3.800h1.800v2.700" stroke="#ffd8c8" stroke-width=".7" fill="none"/></svg>
<div class="t" style="left:567.700px;top:251.1px;color:#0c1c3c">Digital</div>
<div class="a" style="left:553.3px;top:269.3px;width:4.400px;height:4.400px;background:#fff;border:1px solid #333;border-radius:1.200px"></div>
<svg class="a" style="left:558px;top:267.5px" width="9" height="9" viewBox="0 0 9 9"><rect x="1.500" y="1" width="6.500" height="7" rx="1.500" fill="#f0604a" stroke="#c83a2a" stroke-width=".6"/><rect x=".5" y="2" width="6" height="6.500" rx="1.500" fill="#f47a5a" stroke="#d84a3a" stroke-width=".5"/><path d="M2.500 6.500V3.800h1.800v2.700" stroke="#ffd8c8" stroke-width=".7" fill="none"/></svg>
<div class="t" style="left:567.700px;top:269.1px;color:#0c1c3c">Digital</div>
<div class="a" style="left:553.3px;top:286.8px;width:4.400px;height:4.400px;background:#fff;border:1px solid #333;border-radius:1.200px"></div>
<svg class="a" style="left:558.5px;top:285.5px" width="6.5" height="7" viewBox="0.8 0.9 5.9 6.8" preserveAspectRatio="none"><path d="M1 6.500C.8 4 2.500 3.500 2.600 1c1.200.8 1.500 2 1.400 3 .8-.5 1.200-1.500 1.200-2.200C6.800 3 7 5 6.500 6.500z" fill="#e8281a"/><path d="M1.300 7.600c0-1.600 1.200-1.800 2.300-1.200 1-.7 2.700-.4 2.700 1.200z" fill="#f7c21a"/></svg>
<div class="t" style="left:567.700px;top:286.6px;color:#0c1c3c">Analog</div>
<div class="a" style="left:553.3px;top:296.3px;width:4.400px;height:4.400px;background:#fff;border:1px solid #333;border-radius:1.200px"></div>
<svg class="a" style="left:558px;top:294.5px" width="9" height="9" viewBox="0 0 9 9"><rect x="1.500" y="1" width="6.500" height="7" rx="1.500" fill="#f0604a" stroke="#c83a2a" stroke-width=".6"/><rect x=".5" y="2" width="6" height="6.500" rx="1.500" fill="#f47a5a" stroke="#d84a3a" stroke-width=".5"/><path d="M2.500 6.500V3.800h1.800v2.700" stroke="#ffd8c8" stroke-width=".7" fill="none"/></svg>
<div class="t" style="left:567.700px;top:296.1px;color:#0c1c3c">Digital</div>
<div class="a" style="left:553.3px;top:313.8px;width:4.400px;height:4.400px;background:#fff;border:1px solid #333;border-radius:1.200px"></div>
<svg class="a" style="left:558.5px;top:312.5px" width="6.5" height="7" viewBox="0.8 0.9 5.9 6.8" preserveAspectRatio="none"><path d="M1 6.500C.8 4 2.500 3.500 2.600 1c1.200.8 1.500 2 1.400 3 .8-.5 1.200-1.500 1.200-2.200C6.800 3 7 5 6.500 6.500z" fill="#e8281a"/><path d="M1.300 7.600c0-1.600 1.200-1.800 2.300-1.200 1-.7 2.700-.4 2.700 1.200z" fill="#f7c21a"/></svg>
<div class="t" style="left:567.700px;top:313.6px;color:#0c1c3c">Analog</div>
<div class="a" style="left:553.3px;top:322.8px;width:4.400px;height:4.400px;background:#fff;border:1px solid #333;border-radius:1.200px"></div>
<svg class="a" style="left:558px;top:321px" width="9" height="9" viewBox="0 0 9 9"><rect x="1.500" y="1" width="6.500" height="7" rx="1.500" fill="#f0604a" stroke="#c83a2a" stroke-width=".6"/><rect x=".5" y="2" width="6" height="6.500" rx="1.500" fill="#f47a5a" stroke="#d84a3a" stroke-width=".5"/><path d="M2.500 6.500V3.800h1.800v2.700" stroke="#ffd8c8" stroke-width=".7" fill="none"/></svg>
<div class="t" style="left:567.700px;top:322.6px;color:#0c1c3c">Digital</div>
</div>
<div class="a" style="left:588.500px;top:56px;width:10px;height:273px;background:#f0f0f0"></div>
<div class="a" style="left:589.500px;top:96px;width:9px;height:86px;background:#cdcdcd"></div>
<svg class="a" style="left:590.500px;top:60px" width="7" height="5" viewBox="0 0 7 5"><path d="M1 4l2.500-2.500L6 4" stroke="#555" stroke-width=".9" fill="none"/></svg>
<svg class="a" style="left:590.500px;top:323px" width="7" height="5" viewBox="0 0 7 5"><path d="M1 1l2.500 2.500L6 1" stroke="#555" stroke-width=".9" fill="none"/></svg>
<div class="a" style="left:152px;top:329px;width:447px;height:10.500px;background:#f0f0f0"></div>
<div class="a" style="left:162.500px;top:331px;width:274px;height:7.500px;background:#cdcdcd"></div>
<svg class="a" style="left:154px;top:331px" width="5" height="7" viewBox="0 0 5 7"><path d="M4 1L1.500 3.500 4 6" stroke="#555" stroke-width=".9" fill="none"/></svg>
<svg class="a" style="left:581px;top:331px" width="5" height="7" viewBox="0 0 5 7"><path d="M1 1l2.500 2.500L1 6" stroke="#555" stroke-width=".9" fill="none"/></svg>
<div class="a" style="left:588.500px;top:44px;width:10px;height:11px;background:#7f7f7f"></div>
<div class="a" style="left:138px;top:329.500px;width:12px;height:10.500px;background:#7f7f7f"></div>
<!-- BOTTOM PANEL -->
<div class="a" style="left:137px;top:338px;width:463px;height:200px;background:#f3f3f3"></div>
<div class="a peach" style="left:137px;top:352.500px;width:461px;height:28px"></div>
<div class="t" style="left:140px;top:357px">Port:</div>
<div class="a" style="left:154px;top:354px;width:36.5px;height:12.5px;background:#fff;border:1px solid #a9a9a9"></div>
<div class="t" style="left:156.5px;top:357px">COM5</div>
<svg class="a" style="left:182.5px;top:358px" width="6" height="5" viewBox="0 0 6 5"><path d="M.8 1l2.200 2.400L5.200 1" fill="none" stroke="#555" stroke-width=".8"/></svg>
<div class="t" style="left:193px;top:357px">Speed:</div>
<div class="a" style="left:213px;top:354px;width:33.5px;height:12.5px;background:#fff;border:1px solid #a9a9a9"></div>
<div class="t" style="left:215.5px;top:357px">9600</div>
<svg class="a" style="left:238.5px;top:358px" width="6" height="5" viewBox="0 0 6 5"><path d="M.8 1l2.200 2.400L5.200 1" fill="none" stroke="#555" stroke-width=".8"/></svg>
<div class="t" style="left:249px;top:357px"><u>F</u>ormat:</div>
<div class="a" style="left:272px;top:354px;width:81.5px;height:12.5px;background:#e4e4e4;border:1px solid #a9a9a9"></div>
<div class="t" style="left:274.5px;top:357px">Unformatted Text</div>
<svg class="a" style="left:345.5px;top:358px" width="6" height="5" viewBox="0 0 6 5"><path d="M.8 1l2.200 2.400L5.200 1" fill="none" stroke="#555" stroke-width=".8"/></svg>
<div class="a" style="left:357px;top:356px;width:7.500px;height:7.500px;background:#fff;border:1px solid #444"></div>
<svg class="a" style="left:357px;top:356px" width="7.500" height="7.500" viewBox="0 0 7.500 7.500"><path d="M1.600 3.800l1.500 1.600L6 1.800" stroke="#222" stroke-width=".9" fill="none"/></svg>
<div class="t" style="left:365.5px;top:356.5px">Reset</div>
<div class="a" style="left:385px;top:356px;width:7.500px;height:7.500px;background:#fff;border:1px solid #444"></div>
<svg class="a" style="left:385px;top:356px" width="7.500" height="7.500" viewBox="0 0 7.500 7.500"><path d="M1.600 3.800l1.500 1.600L6 1.800" stroke="#222" stroke-width=".9" fill="none"/></svg>
<div class="t" style="left:393.5px;top:356.5px">Log</div>
<div class="a" style="left:405px;top:354px;width:12px;height:12.500px;background:#dce8f4;border:1px solid #b0c8e0"></div>
<svg class="a" style="left:406px;top:355px" width="10" height="11" viewBox="0 0 10 11"><rect x="1.500" y="1.500" width="7" height="8" fill="#f8fbff" stroke="#7aa0c8" stroke-width=".6"/><path d="M3 4h4M3 5.800h4M3 7.600h4" stroke="#7aa0d8" stroke-width=".6"/></svg>
<div class="a" style="left:422.500px;top:354px;width:48.500px;height:12.500px;background:#e1e1e1;border:1px solid #adadad"></div>
<svg class="a" style="left:431px;top:355.500px" width="10" height="10" viewBox="0 0 10 10"><path d="M1 8.500l2-5.500 5-1.500-1.500 5.500z" fill="#e8b820" stroke="#8a6a10" stroke-width=".6"/><path d="M3 6.500l3.500-3" stroke="#5a4a10" stroke-width=".8"/></svg>
<div class="t" style="left:442px;top:357px">Connect</div>
<svg class="a" style="left:575px;top:355.500px" width="9.500" height="9.500" viewBox="0 0 11 11"><path d="M2 1.800l3.500 3.700" stroke="#8a8a90" stroke-width="1"/><path d="M5.500 5.500l3.800 3.800" stroke="#b4544c" stroke-width="2.100" stroke-linecap="round"/><path d="M1.800 9.200l3.700-3.700" stroke="#2c60b0" stroke-width="2.100" stroke-linecap="round"/><path d="M5.500 5.500l3-3" stroke="#9a9aa2" stroke-width="1.500"/><circle cx="9" cy="2" r="1.300" fill="#b0b0b8"/></svg>
<svg class="a" style="left:587px;top:355.5px" width="10" height="10" viewBox="0 0 11 11"><rect x=".8" y=".8" width="9.400" height="9.400" rx="1.500" fill="#e83a3a" stroke="#b82020" stroke-width=".6"/><path d="M3.800 3.500a2.600 2.600 0 1 0 3.400 0" stroke="#fff" stroke-width="1" fill="none"/><path d="M5.500 2.200v3" stroke="#fff" stroke-width="1"/></svg>
<div class="a" style="left:138px;top:369.500px;width:43px;height:12.500px;background:#f8f8f8;border:1px solid #e4e4e4;border-bottom:none"></div>
<div class="a" style="left:181px;top:370.500px;width:32px;height:11px;background:#efefef;border:1px solid #e2e2e2;border-bottom:none"></div>
<svg class="a" style="left:141px;top:371px" width="9" height="8" viewBox="0 0 9 8"><rect x=".5" y=".8" width="8" height="6" fill="#2a3a2a" stroke="#556" stroke-width=".5"/><path d="M1.500 2.500l2 1.500-2 1.500" stroke="#5ad05a" stroke-width=".8" fill="none"/></svg>
<div class="t" style="left:154px;top:373px">Terminal</div>
<svg class="a" style="left:183px;top:371px" width="9" height="8" viewBox="0 0 9 8"><rect x=".5" y=".8" width="8" height="5.500" fill="#3a6ac0" stroke="#2a4a90" stroke-width=".5"/><rect x="1.500" y="1.800" width="6" height="2" fill="#8ab8f0"/><rect x="2.500" y="6.500" width="4" height="1" fill="#667"/></svg>
<div class="t" style="left:195px;top:373px">Scope</div>
<div class="a" style="left:138px;top:381px;width:461px;height:156px;background:#fafafa"></div>
<div class="a" style="left:143px;top:389.5px;width:7.500px;height:7.500px;background:#fff;border:1px solid #444"></div>
<svg class="a" style="left:143px;top:389.5px" width="7.500" height="7.500" viewBox="0 0 7.500 7.500"><path d="M1.600 3.800l1.500 1.600L6 1.800" stroke="#222" stroke-width=".9" fill="none"/></svg>
<div class="t" style="left:151.5px;top:390px">Auto Scroll</div>
<div class="a" style="left:188px;top:389.5px;width:7.500px;height:7.500px;background:#fff;border:1px solid #444"></div>
<div class="t" style="left:196.5px;top:390px">Hold</div>
<div class="a" style="left:544px;top:384.500px;width:49.500px;height:13px;background:#dedede;border:1px solid #bdbdbd"></div>
<svg class="a" style="left:556px;top:386px" width="9" height="10" viewBox="0 0 9 10"><path d="M2 1l3 4" stroke="#b8802a" stroke-width="1.100"/><path d="M3.500 5l3.500-1.500 1.500 4.500-4 1z" fill="#f0c840" stroke="#c89a20" stroke-width=".4"/></svg>
<div class="t" style="left:567px;top:387.500px">Clear</div>
<div class="a" style="left:139px;top:401px;width:458px;height:116px;background:#fff;border:1px solid #9a9a9a;border-top-color:#7a7a7a"></div>
<div class="a" style="left:587.500px;top:402px;width:8.500px;height:114px;background:#f4f4f4"></div>
<svg class="a" style="left:588.500px;top:404px" width="7" height="5" viewBox="0 0 7 5"><path d="M1 4l2.500-2.500L6 4" stroke="#aaa" stroke-width=".9" fill="none"/></svg>
<svg class="a" style="left:588.500px;top:508.500px" width="7" height="5" viewBox="0 0 7 5"><path d="M1 1l2.500 2.500L6 1" stroke="#aaa" stroke-width=".9" fill="none"/></svg>
<div class="a" style="left:143px;top:521.500px;width:360.500px;height:11px;background:#fff;border:1px solid #d0d0d0"></div>
<div class="a" style="left:506.5px;top:523.5px;width:7.500px;height:7.500px;background:#fff;border:1px solid #444"></div>
<svg class="a" style="left:506.5px;top:523.5px" width="7.500" height="7.500" viewBox="0 0 7.500 7.500"><path d="M1.600 3.800l1.500 1.600L6 1.800" stroke="#222" stroke-width=".9" fill="none"/></svg>
<div class="t" style="left:515px;top:525px">Auto Clear</div>
<div class="a" style="left:552px;top:521px;width:41.500px;height:12.500px;background:#cccccc;border:1px solid #bfbfbf"></div>
<svg class="a" style="left:561px;top:523.500px" width="8" height="8" viewBox="0 0 8 8"><rect x="1" y="2" width="6" height="5" fill="#e8e8e8" stroke="#8a8a8a" stroke-width=".6"/><path d="M2 5.500l1.500-2 2 1" stroke="#909090" stroke-width=".6" fill="none"/></svg>
<div class="t" style="left:571px;top:525px">Send</div>
<!-- RIGHT PANEL -->
<div class="a" style="left:598px;top:43px;width:150px;height:497px;background:#f1f1f1"></div>
<div class="a peach" style="left:600px;top:43px;width:148px;height:15px"></div>
<div class="a" style="left:603px;top:45px;width:63px;height:12px;background:#fff;border:1px solid #a9a9a9"></div>
<div class="t" style="left:605px;top:47.500px">map</div>
<svg class="a" style="left:667px;top:45px" width="12" height="12" viewBox="0 0 12 12"><rect x="3" y="2" width="6" height="8" fill="#d0d8e0"/><path d="M1.500 2l9 8.500M10.500 1.500l-9 9" stroke="#d0202a" stroke-width="1.400"/></svg>
<div class="a" style="left:680px;top:44px;width:12px;height:13px;background:#c5dcf0;border:1px solid #b0cde8"></div>
<svg class="a" style="left:680px;top:45px" width="16" height="12" viewBox="0 0 16 12"><path d="M5 1.500c2 .5 3 3 3.500 6l-6 .5c.5-3 1.500-5 2.500-6.500z" fill="#3a4ab0"/><ellipse cx="6" cy="8.500" rx="5" ry="1.600" fill="#2a3a98"/><path d="M12.300 5h3l-1.500 1.800z" fill="#222"/></svg>
<svg class="a" style="left:696.5px;top:45.500px" width="10.500" height="10.500" viewBox="0 0 12 12"><path d="M1 3h3.500l1 1H11v6H1z" fill="#f7dc6a" stroke="#d8b040" stroke-width=".5"/><path d="M6 6h4v4H7z" fill="#fff8d0" stroke="#c8a840" stroke-width=".4"/></svg>
<svg class="a" style="left:708.5px;top:46px" width="10.5" height="9.6" viewBox="0 0 12 11"><path d="M1 1.500h2.500l.8 1H8v4H1z" fill="#f2d468" stroke="#d0aa3a" stroke-width=".4"/><path d="M3 4h2.500l.8 1H11v5H3z" fill="#46b4d4" stroke="#2a8cb0" stroke-width=".5"/><path d="M7 5.800l2.200 2H7.800v1.400H6.200V7.800H4.800z" fill="#dff4fa"/><path d="M9 8.500h2.500v2H9z" fill="#f2d468"/></svg>
<svg class="a" style="left:721.5px;top:46px" width="10.5" height="9.6" viewBox="0 0 12 11"><path d="M1 1.500h2.500l.8 1H8v4H1z" fill="#f2d468" stroke="#d0aa3a" stroke-width=".4"/><path d="M3 4h2.500l.8 1H11v5H3z" fill="#46b4d4" stroke="#2a8cb0" stroke-width=".5"/><path d="M7 5.800l2.200 2H7.800v1.400H6.200V7.800H4.800z" fill="#dff4fa"/><path d="M9 8.500h2.500v2H9z" fill="#f2d468"/></svg>
<svg class="a" style="left:733.500px;top:45.500px" width="10.500" height="10.500" viewBox="0 0 12 12"><path d="M2.200 2l3.800 4" stroke="#8a8a90" stroke-width="1.100"/><path d="M6 6l4.200 4.200" stroke="#b4544c" stroke-width="2.300" stroke-linecap="round"/><path d="M2 10l4-4" stroke="#2c60b0" stroke-width="2.300" stroke-linecap="round"/><path d="M6 6l3.300-3.300" stroke="#9a9aa2" stroke-width="1.600"/><circle cx="9.800" cy="2.200" r="1.400" fill="#b0b0b8"/></svg>
<div class="a" style="left:603px;top:60px;width:46px;height:46px;background:#fff;border:2px solid #52b862;border-radius:4px;overflow:hidden"><div class="a" style="left:0;top:0;width:46px;height:9.800px;background:linear-gradient(#7cd87c,#a2e6a2)"></div></div>
<svg class="a" style="left:606.5px;top:62px" width="9" height="9" viewBox="0 0 9 9"><path d="M.8 4.500l2.200-2h3.800l1.400 1.200-3.800 3.300z" fill="#6a9a90" stroke="#4a7a6a" stroke-width=".5"/><path d="M3 2.500l1.500 1.800 3.500-.6" stroke="#b8d8d0" stroke-width=".5" fill="none"/></svg>
<div class="t" style="left:617px;top:63px;color:#fff;font-size:7px">Math</div>
<div class="a" style="left:609px;top:77px;width:21px;height:21px;border-radius:2.500px;border:1px solid #454545;background:linear-gradient(170deg,#6c6c6c,#8e9498 55%,#a8acb0)"></div><svg class="a" style="left:609px;top:77px" width="21" height="21" viewBox="0 0 21 21"><path d="M3 3l11 15" stroke="#e0707a" stroke-width="1"/><path d="M4 14c0-4 3-5 3.500-9 2 1.500 2.500 4 2 5.500 1.200-.8 1.800-2.200 1.800-3.200 2 2 2.500 4.500 1.500 6.700z" fill="#e02a1a"/><path d="M3.500 15.500c.5-2.500 2.500-3 4-2 1.500-1.500 4.500-1 6 1.500l-2.500 2.500z" fill="#f8d020"/><path d="M9 17.500l5-2.500" stroke="#f0f0e0" stroke-width="1.200"/></svg>
<div class="a" style="left:603px;top:110px;width:46px;height:44.5px;background:#fff;border:2px solid #333;border-radius:4px;overflow:hidden"><div class="a" style="left:0;top:0;width:46px;height:9.800px;background:linear-gradient(#5e5e5e,#a4a4a4)"></div></div>
<svg class="a" style="left:606.5px;top:112px" width="10" height="9" viewBox="0 0 10 9"><path d="M2 7c0-2.500 1.500-3 1.800-5 1 .8 1.300 2 1 3 .8-.5 1.200-1.400 1.200-2C7.500 4.200 7.800 5.800 7 7z" fill="#e8381a"/><path d="M1.500 8c.3-1.500 2-1.700 3-1 1-.7 3-.5 3.500 1z" fill="#f7c21a"/></svg>
<div class="t" style="left:617px;top:113px;color:#fff;font-size:7px">Analog</div>
<div class="a" style="left:609px;top:126px;width:21px;height:21px;border-radius:2.500px;border:1px solid #454545;background:linear-gradient(170deg,#6c6c6c,#8e9498 55%,#a8acb0)"></div><svg class="a" style="left:609px;top:126px" width="21" height="21" viewBox="0 0 21 21"><path d="M3 3l11 15" stroke="#e0707a" stroke-width="1"/><path d="M4 14c0-4 3-5 3.500-9 2 1.500 2.500 4 2 5.500 1.200-.8 1.800-2.200 1.800-3.200 2 2 2.500 4.500 1.500 6.700z" fill="#e02a1a"/><path d="M3.500 15.500c.5-2.500 2.500-3 4-2 1.500-1.500 4.500-1 6 1.500l-2.500 2.500z" fill="#f8d020"/><path d="M9 17.500l5-2.500" stroke="#f0f0e0" stroke-width="1.200"/></svg>
<div class="a" style="left:652px;top:60px;width:71px;height:70px;background:#fff;border:2px solid #333;border-radius:4px;overflow:hidden"><div class="a" style="left:0;top:0;width:71px;height:9.800px;background:linear-gradient(#5e5e5e,#a4a4a4)"></div></div>
<svg class="a" style="left:655.5px;top:62px" width="10" height="9" viewBox="0 0 10 9"><rect x="1.500" y=".8" width="6" height="7.500" fill="#f4f4f4" stroke="#c8c8c8" stroke-width=".5"/><circle cx="5" cy="4" r="1.600" fill="#b8c8d8"/><path d="M6 5.500l2 2" stroke="#8a8a8a" stroke-width=".9"/></svg>
<div class="t" style="left:666px;top:63px;color:#fff;font-size:7px">Filters</div>
<div class="a" style="left:658px;top:77.5px;width:46px;height:45px;background:#fff;border:2px solid #333;border-radius:4px;overflow:hidden"><div class="a" style="left:0;top:0;width:46px;height:9.800px;background:linear-gradient(#5e5e5e,#a4a4a4)"></div></div>
<svg class="a" style="left:661.5px;top:79.5px" width="9" height="9" viewBox="0 0 9 9"><path d="M.8 4.500l2.200-2h3.800l1.400 1.200-3.800 3.300z" fill="#6a9a90" stroke="#4a7a6a" stroke-width=".5"/><path d="M3 2.500l1.500 1.800 3.500-.6" stroke="#b8d8d0" stroke-width=".5" fill="none"/></svg>
<div class="t" style="left:672px;top:80.5px;color:#fff;font-size:7px">Math</div>
<div class="a" style="left:664px;top:94px;width:21px;height:21px;border-radius:2.500px;border:1px solid #454545;background:linear-gradient(170deg,#6c6c6c,#8e9498 55%,#a8acb0)"></div><svg class="a" style="left:664px;top:94px" width="21" height="21" viewBox="0 0 21 21"><path d="M3 3l11 15" stroke="#e0707a" stroke-width="1"/><path d="M4 14c0-4 3-5 3.500-9 2 1.500 2.500 4 2 5.500 1.200-.8 1.800-2.200 1.800-3.200 2 2 2.500 4.500 1.500 6.700z" fill="#e02a1a"/><path d="M3.500 15.500c.5-2.500 2.500-3 4-2 1.500-1.500 4.500-1 6 1.500l-2.500 2.500z" fill="#f8d020"/><path d="M9 17.500l5-2.500" stroke="#f0f0e0" stroke-width="1.200"/></svg>
<div class="a peach" style="left:600px;top:524px;width:146px;height:14px"></div>
<div class="t b" style="left:651.500px;top:528.500px;font-size:6.500px;letter-spacing:-.1px">Arduino eBay Ads:</div>
<svg class="a" style="left:723.500px;top:527px" width="10" height="10" viewBox="0 0 11 11"><path d="M2 1.800l3.500 3.700" stroke="#8a8a90" stroke-width="1"/><path d="M5.500 5.500l3.800 3.800" stroke="#b4544c" stroke-width="2.100" stroke-linecap="round"/><path d="M1.800 9.200l3.700-3.700" stroke="#2c60b0" stroke-width="2.100" stroke-linecap="round"/><path d="M5.500 5.500l3-3" stroke="#9a9aa2" stroke-width="1.500"/><circle cx="9" cy="2" r="1.300" fill="#b0b0b8"/></svg>
<svg class="a" style="left:735.5px;top:527px" width="10" height="10" viewBox="0 0 11 11"><rect x=".8" y=".8" width="9.400" height="9.400" rx="1.500" fill="#e83a3a" stroke="#b82020" stroke-width=".6"/><path d="M3.800 3.500a2.600 2.600 0 1 0 3.400 0" stroke="#fff" stroke-width="1" fill="none"/><path d="M5.500 2.200v3" stroke="#fff" stroke-width="1"/></svg>
<div class="a" style="left:0;top:536.500px;width:748px;height:1.500px;background:#fbfbfb"></div>
<div class="a" style="left:0;top:537.500px;width:748px;height:2.500px;background:linear-gradient(#6a9fd0,#b8cfe6)"></div>
<div class="a" style="left:0;top:17px;width:1px;height:25px;background:#8aa8c8"></div>
<div class="a" style="left:1px;top:17px;width:1.500px;height:25px;background:#fafcff"></div>
<div class="a" style="left:0;top:168.500px;width:1px;height:372px;background:#8aa8c8"></div>
<div class="a" style="left:1px;top:168.500px;width:1.500px;height:369px;background:#fafcff"></div>
<div class="a" style="left:745.500px;top:17px;width:1px;height:521px;background:#b8d4ec"></div>
<div class="a" style="left:746.500px;top:17px;width:1.500px;height:521px;background:#fdfdfd"></div>
</div></body></html>
